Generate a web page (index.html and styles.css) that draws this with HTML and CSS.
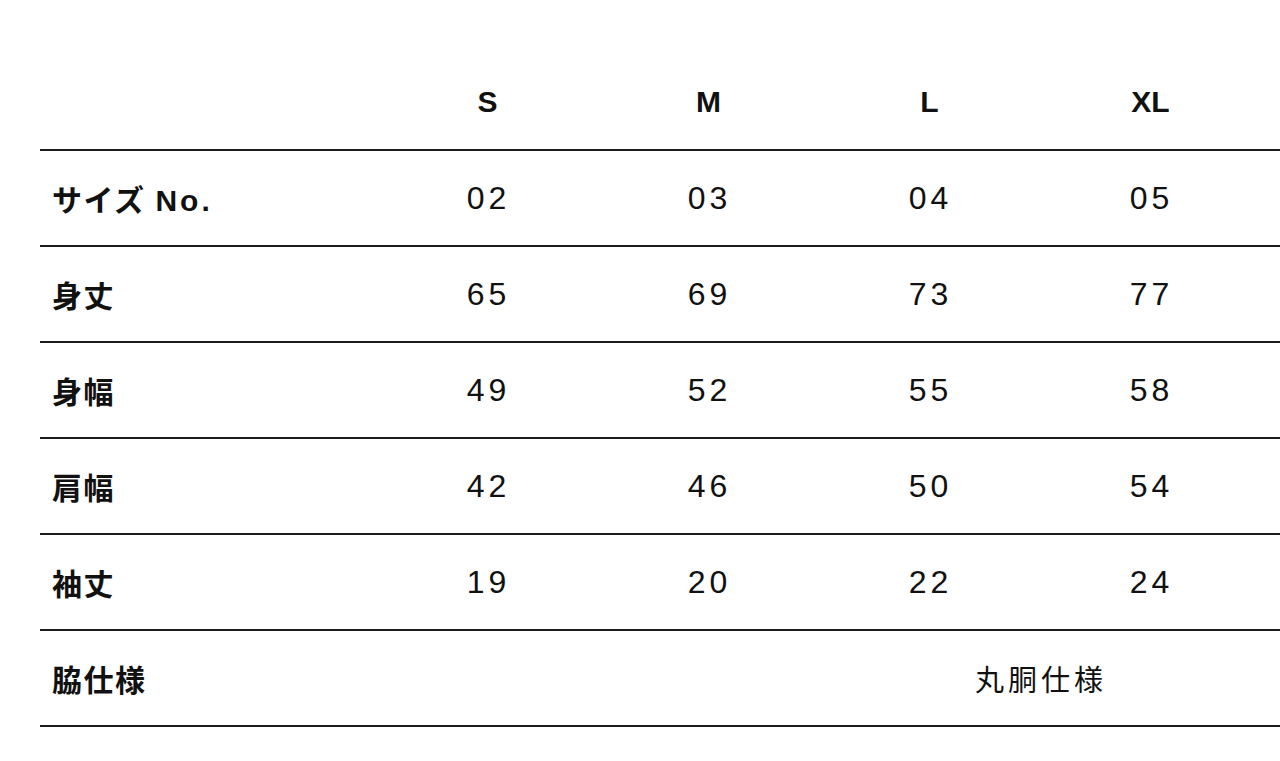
FILE: index.html
```html
<!DOCTYPE html>
<html lang="ja">
<head>
<meta charset="utf-8">
<title>サイズ表</title>
<link rel="stylesheet" href="styles.css">
</head>
<body>
<div class="page">
  <table class="size-table">
    <colgroup>
      <col class="col-label">
      <col class="col-size"><col class="col-size"><col class="col-size"><col class="col-size">
      <col class="col-rest">
    </colgroup>
    <thead>
      <tr>
        <th class="label"></th>
        <th>S</th><th>M</th><th>L</th><th>XL</th><th class="rest"></th>
      </tr>
    </thead>
    <tbody>
      <tr>
        <th class="label">サイズ <span class="latin">No.</span></th>
        <td>02</td><td>03</td><td>04</td><td>05</td><td class="rest"></td>
      </tr>
      <tr>
        <th class="label">身丈</th>
        <td>65</td><td>69</td><td>73</td><td>77</td><td class="rest"></td>
      </tr>
      <tr>
        <th class="label">身幅</th>
        <td>49</td><td>52</td><td>55</td><td>58</td><td class="rest"></td>
      </tr>
      <tr>
        <th class="label">肩幅</th>
        <td>42</td><td>46</td><td>50</td><td>54</td><td class="rest"></td>
      </tr>
      <tr>
        <th class="label">袖丈</th>
        <td>19</td><td>20</td><td>22</td><td>24</td><td class="rest"></td>
      </tr>
      <tr>
        <th class="label">脇仕様</th>
        <td class="span-text" colspan="5">丸胴仕様</td>
      </tr>
    </tbody>
  </table>
</div>
</body>
</html>
```

FILE: styles.css
```css
html, body {
  margin: 0;
  padding: 0;
  background: #ffffff;
  overflow: hidden;
}

body {
  font-family: "Liberation Sans", "Noto Sans CJK JP", sans-serif;
  color: #111111;
}

.page {
  padding: 55px 0 0 40px;
  width: 1800px;
}

.size-table {
  border-collapse: collapse;
  table-layout: fixed;
  width: 1662px;
}

.col-label {
  width: 336px;
}

.col-size {
  width: 221px;
}

.col-rest {
  width: 442px;
}

.size-table th,
.size-table td {
  height: 94px;
  padding: 0;
  border-bottom: 2px solid #1c1c1c;
  text-align: center;
  vertical-align: middle;
}

.size-table thead th {
  font-size: 30px;
  font-weight: 700;
  padding-left: 2px;
}

.size-table th.label {
  text-align: left;
  padding-left: 12px;
  font-size: 30px;
  font-weight: 700;
  letter-spacing: 1.5px;
}

.size-table th.label .latin {
  letter-spacing: 3px;
}

.size-table td {
  font-size: 32px;
  font-weight: 400;
  letter-spacing: 4px;
  padding-left: 4px;
}

.size-table td.span-text {
  font-family: "Noto Sans CJK JP", sans-serif;
  font-size: 29px;
  letter-spacing: 4px;
  padding-left: 4px;
}
```
